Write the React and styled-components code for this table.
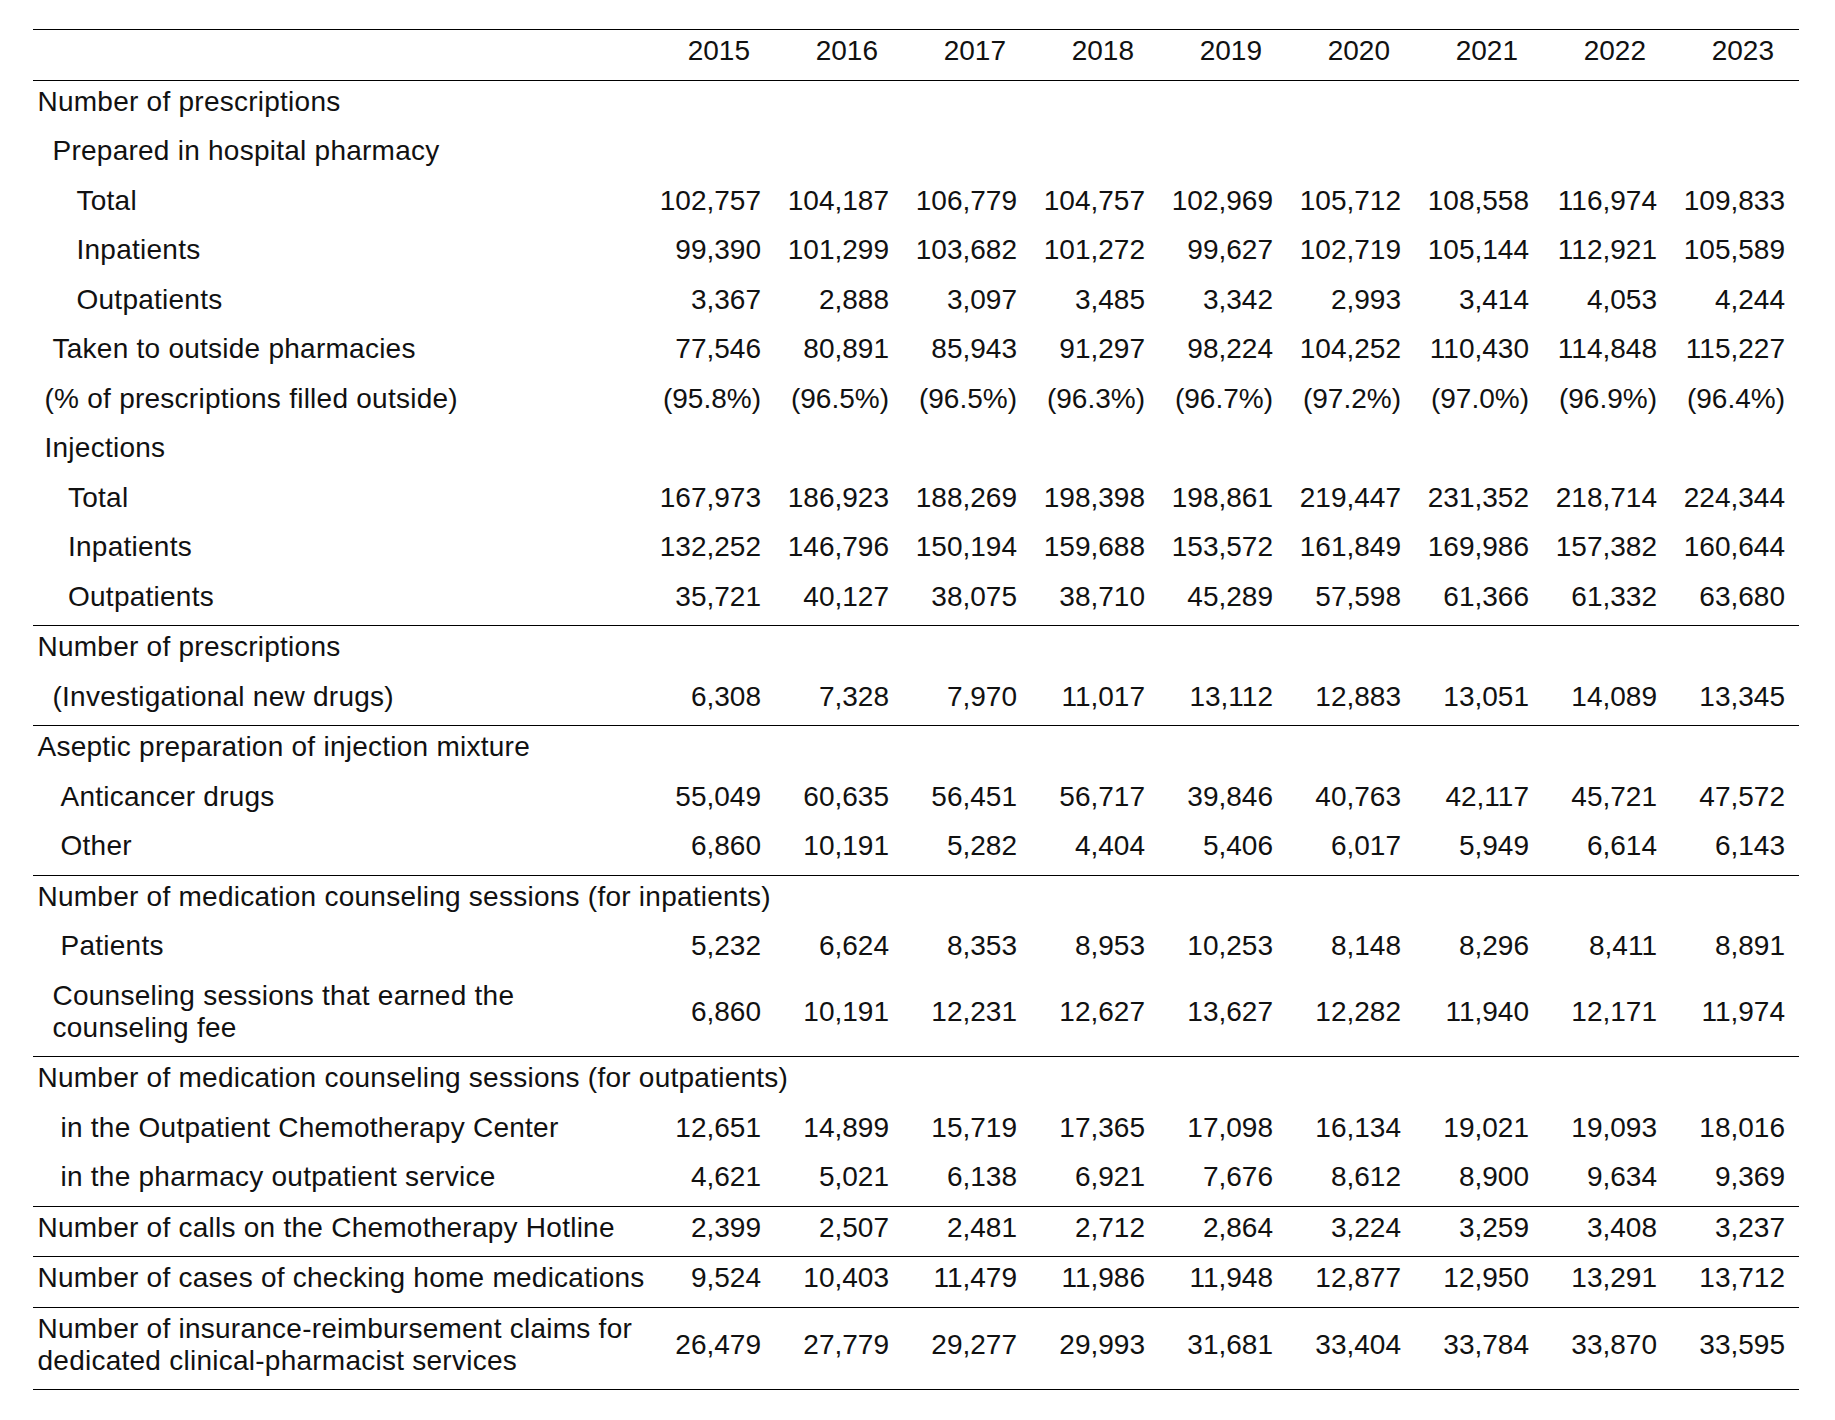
import React from 'react';
import styled, { createGlobalStyle } from 'styled-components';

const GlobalStyle = createGlobalStyle`
  html, body {
    margin: 0;
    padding: 0;
    background: #fff;
  }
  body {
    font-family: "Liberation Sans", Arial, sans-serif;
    color: #111;
  }
`;

const Page = styled.div`
  padding: 29px 36px 30px 33px;
`;

const Table = styled.table`
  width: 1766px;
  border-collapse: collapse;
  table-layout: fixed;
  font-size: 28px;
  line-height: 32px;
  border-top: 1px solid #000;
  border-bottom: 1px solid #000;
`;

const LabelCol = styled.col`
  width: 614px;
`;

const YearCol = styled.col`
  width: 128px;
`;

const Head = styled.thead`
  border-bottom: 1px solid #000;
`;

const YearCell = styled.th`
  font-weight: normal;
  text-align: right;
  padding: 4.5px 25px 13px 0;
  white-space: nowrap;
`;

const Group = styled.tbody`
  border-bottom: 1px solid #000;
`;

const Label = styled.td`
  padding: 5px 0 12.5px ${(p) => 4.5 + (p.$indent || 0)}px;
  text-align: left;
  white-space: nowrap;
  letter-spacing: 0.25px;
  vertical-align: middle;
`;

const Value = styled.td`
  padding: 5px 14px 12.5px 0;
  text-align: right;
  white-space: nowrap;
  vertical-align: middle;
`;

const years = [2015, 2016, 2017, 2018, 2019, 2020, 2021, 2022, 2023];

const groups = [
  [
    { label: 'Number of prescriptions' },
    { label: 'Prepared in hospital pharmacy', indent: 15 },
    { label: 'Total', indent: 39, values: ['102,757', '104,187', '106,779', '104,757', '102,969', '105,712', '108,558', '116,974', '109,833'] },
    { label: 'Inpatients', indent: 39, values: ['99,390', '101,299', '103,682', '101,272', '99,627', '102,719', '105,144', '112,921', '105,589'] },
    { label: 'Outpatients', indent: 39, values: ['3,367', '2,888', '3,097', '3,485', '3,342', '2,993', '3,414', '4,053', '4,244'] },
    { label: 'Taken to outside pharmacies', indent: 15, values: ['77,546', '80,891', '85,943', '91,297', '98,224', '104,252', '110,430', '114,848', '115,227'] },
    { label: '(% of prescriptions filled outside)', indent: 7, values: ['(95.8%)', '(96.5%)', '(96.5%)', '(96.3%)', '(96.7%)', '(97.2%)', '(97.0%)', '(96.9%)', '(96.4%)'] },
    { label: 'Injections', indent: 7 },
    { label: 'Total', indent: 30.5, values: ['167,973', '186,923', '188,269', '198,398', '198,861', '219,447', '231,352', '218,714', '224,344'] },
    { label: 'Inpatients', indent: 30.5, values: ['132,252', '146,796', '150,194', '159,688', '153,572', '161,849', '169,986', '157,382', '160,644'] },
    { label: 'Outpatients', indent: 30.5, values: ['35,721', '40,127', '38,075', '38,710', '45,289', '57,598', '61,366', '61,332', '63,680'] },
  ],
  [
    { label: 'Number of prescriptions' },
    { label: '(Investigational new drugs)', indent: 15, values: ['6,308', '7,328', '7,970', '11,017', '13,112', '12,883', '13,051', '14,089', '13,345'] },
  ],
  [
    { label: 'Aseptic preparation of injection mixture' },
    { label: 'Anticancer drugs', indent: 23, values: ['55,049', '60,635', '56,451', '56,717', '39,846', '40,763', '42,117', '45,721', '47,572'] },
    { label: 'Other', indent: 23, values: ['6,860', '10,191', '5,282', '4,404', '5,406', '6,017', '5,949', '6,614', '6,143'] },
  ],
  [
    { label: 'Number of medication counseling sessions (for inpatients)' },
    { label: 'Patients', indent: 23, values: ['5,232', '6,624', '8,353', '8,953', '10,253', '8,148', '8,296', '8,411', '8,891'] },
    { label: ['Counseling sessions that earned the', 'counseling fee'], indent: 15, values: ['6,860', '10,191', '12,231', '12,627', '13,627', '12,282', '11,940', '12,171', '11,974'] },
  ],
  [
    { label: 'Number of medication counseling sessions (for outpatients)' },
    { label: 'in the Outpatient Chemotherapy Center', indent: 23, values: ['12,651', '14,899', '15,719', '17,365', '17,098', '16,134', '19,021', '19,093', '18,016'] },
    { label: 'in the pharmacy outpatient service', indent: 23, values: ['4,621', '5,021', '6,138', '6,921', '7,676', '8,612', '8,900', '9,634', '9,369'] },
  ],
  [
    { label: 'Number of calls on the Chemotherapy Hotline', values: ['2,399', '2,507', '2,481', '2,712', '2,864', '3,224', '3,259', '3,408', '3,237'] },
  ],
  [
    { label: 'Number of cases of checking home medications', values: ['9,524', '10,403', '11,479', '11,986', '11,948', '12,877', '12,950', '13,291', '13,712'] },
  ],
  [
    { label: ['Number of insurance-reimbursement claims for', 'dedicated clinical-pharmacist services'], values: ['26,479', '27,779', '29,277', '29,993', '31,681', '33,404', '33,784', '33,870', '33,595'] },
  ],
];

function renderLabel(label) {
  if (Array.isArray(label)) {
    return label.map((line, i) => (
      <React.Fragment key={i}>
        {i > 0 && <br />}
        {line}
      </React.Fragment>
    ));
  }
  return label;
}

export default function App() {
  return (
    <Page>
      <GlobalStyle />
      <Table>
        <colgroup>
          <LabelCol />
          {years.map((y) => (
            <YearCol key={y} />
          ))}
        </colgroup>
        <Head>
          <tr>
            <YearCell />
            {years.map((y) => (
              <YearCell key={y}>{y}</YearCell>
            ))}
          </tr>
        </Head>
        {groups.map((rows, gi) => (
          <Group key={gi}>
            {rows.map((row, ri) =>
              row.values ? (
                <tr key={ri}>
                  <Label $indent={row.indent}>{renderLabel(row.label)}</Label>
                  {row.values.map((v, vi) => (
                    <Value key={vi}>{v}</Value>
                  ))}
                </tr>
              ) : (
                <tr key={ri}>
                  <Label $indent={row.indent} colSpan={10}>
                    {renderLabel(row.label)}
                  </Label>
                </tr>
              )
            )}
          </Group>
        ))}
      </Table>
    </Page>
  );
}
